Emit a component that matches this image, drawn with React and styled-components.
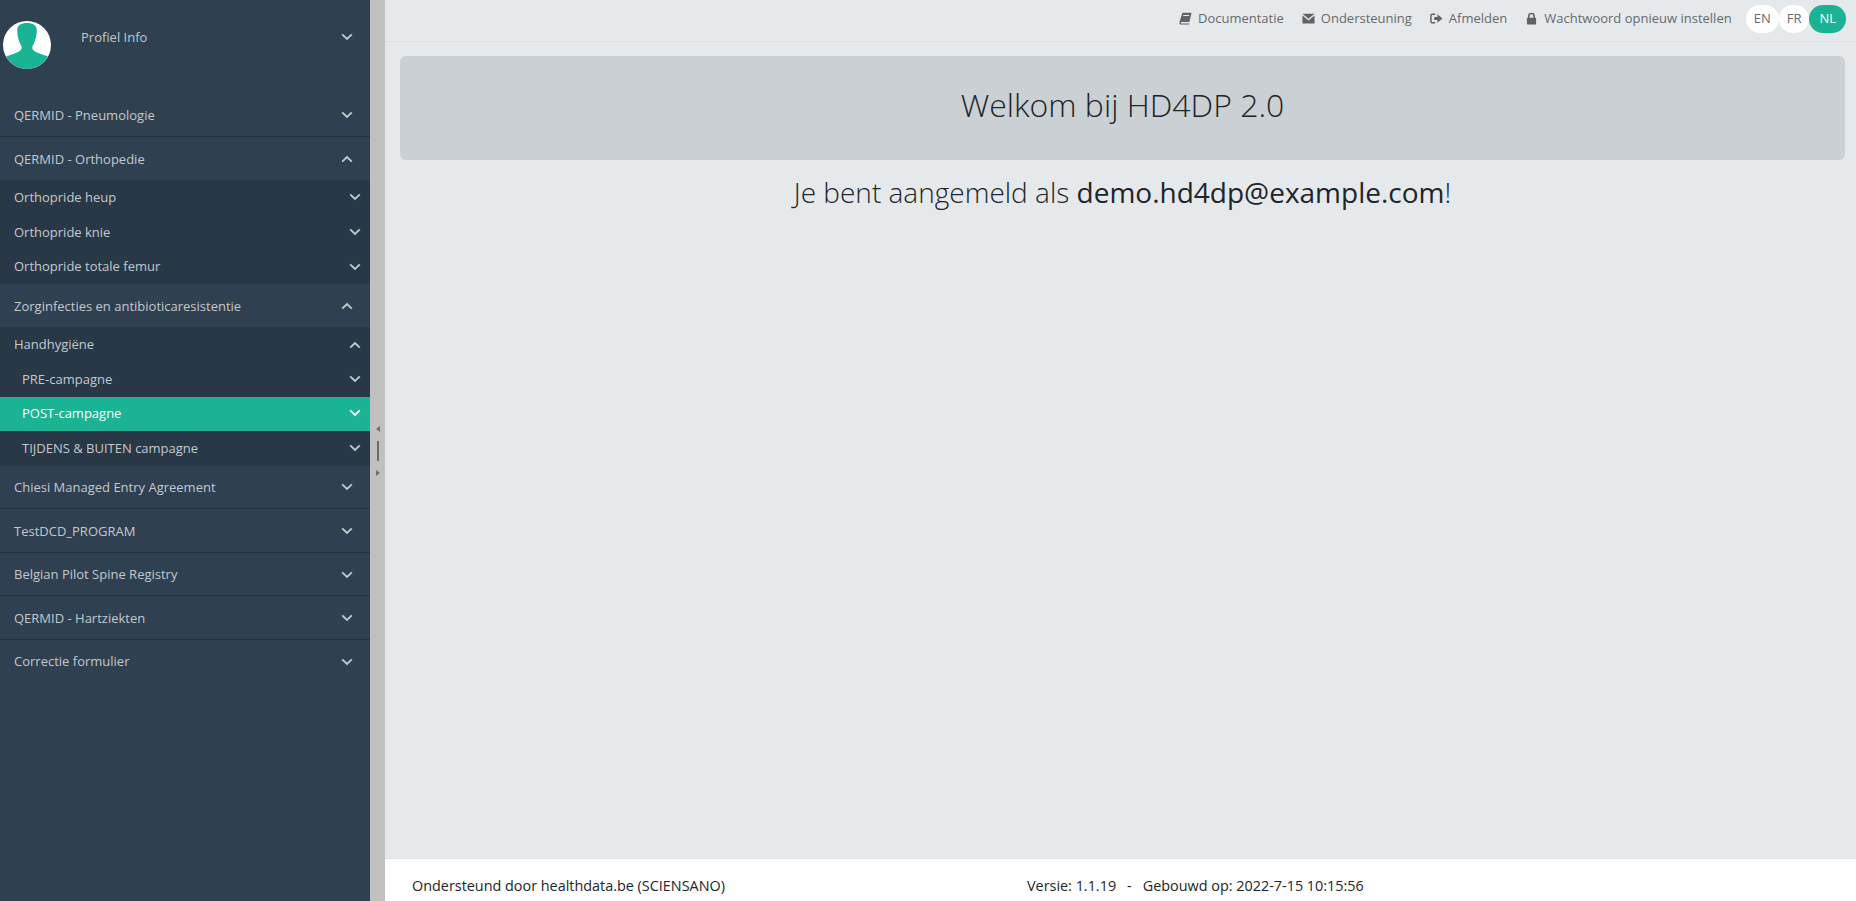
import React from 'react'
import styled, { createGlobalStyle } from 'styled-components'

const GlobalStyle = createGlobalStyle`
  html, body {
    margin: 0;
    padding: 0;
    height: 100%;
    overflow: hidden;
    font-family: "Open Sans", "Noto Sans", sans-serif;
    font-size: 13px;
    line-height: 1.42857;
    color: #212529;
  }
`

const Chevron = ({ up }) => (
  <ChevronSvg viewBox="0 0 12 8" $up={up}>
    <path d="M1.2 1.4 L6 6 L10.8 1.4" fill="none" stroke="currentColor" strokeWidth="1.9" />
  </ChevronSvg>
)

const BookIcon = () => (
  <TopIcon viewBox="0 0 13 13">
    <path d="M3.4 0.8 H12.6 L10.4 10 H2.4 C1.6 10 1.5 11.4 2.4 11.4 H10.6 L10.2 12.6 H1.8 C0.4 12.6 0.2 11.2 0.5 10 Z M4.4 3 L4.1 4 H10 L10.3 3 Z" fill="currentColor" fillRule="evenodd" />
  </TopIcon>
)

const MailIcon = () => (
  <TopIcon viewBox="0 0 14 13">
    <path d="M0.5 1.4 H13.5 L7 6.8 Z M0.5 3.2 L7 8.6 L13.5 3.2 V11.8 H0.5 Z" fill="currentColor" />
  </TopIcon>
)

const LogoutIcon = () => (
  <TopIcon viewBox="0 0 14 13">
    <path d="M5.6 2 H2.2 C1.4 2 1 2.6 1 3.2 V9.8 C1 10.4 1.4 11 2.2 11 H5.6" fill="none" stroke="currentColor" strokeWidth="1.6" />
    <path d="M4.6 4.8 H8 V2 L13.4 6.5 L8 11 V8.2 H4.6 Z" fill="currentColor" />
  </TopIcon>
)

const LockIcon = () => (
  <TopIcon viewBox="0 0 12 13">
    <path d="M3.4 6 V3.8 C3.4 0.8 8.6 0.8 8.6 3.8 V6" fill="none" stroke="currentColor" strokeWidth="1.6" />
    <rect x="1.4" y="5.8" width="9.2" height="6.6" rx="0.6" fill="currentColor" />
  </TopIcon>
)

const Avatar = () => (
  <AvatarSvg viewBox="0 0 48 48">
    <circle cx="24" cy="24" r="24" fill="#ffffff" />
    <path d="M3.2 35.5 L14 31.4 C18 29.8 19 27.6 18.6 25.4 C16 21 14.2 15.5 14.2 9.5 C14.2 4 18 2 24 2 C30 2 33.8 4 33.8 9.5 C33.8 15.5 32 21 29.4 25.4 C29 27.6 30 29.8 34 31.4 L44.8 35.5 C40.6 43 33 48 24 48 C15 48 7.4 43 3.2 35.5 Z" fill="#1ab394" />
  </AvatarSvg>
)

const links = [
  { label: 'Documentatie', icon: <BookIcon /> },
  { label: 'Ondersteuning', icon: <MailIcon /> },
  { label: 'Afmelden', icon: <LogoutIcon /> },
  { label: 'Wachtwoord opnieuw instellen', icon: <LockIcon /> },
]

function App() {
  return (
    <>
      <GlobalStyle />
      <Page>
        <Sidebar>
          <ProfileRow>
            <Avatar />
            <ProfileName>Profiel Info</ProfileName>
            <Chevron />
          </ProfileRow>

          <Menu>
            <MenuRow>QERMID - Pneumologie<Chevron /></MenuRow>

            <MenuRow $open>QERMID - Orthopedie<Chevron up /></MenuRow>
            <SubMenu>
              <SubRow>Orthopride heup<Chevron /></SubRow>
              <SubRow>Orthopride knie<Chevron /></SubRow>
              <SubRow>Orthopride totale femur<Chevron /></SubRow>
            </SubMenu>

            <MenuRow $open>Zorginfecties en antibioticaresistentie<Chevron up /></MenuRow>
            <SubMenu>
              <SubRow>Handhygiëne<Chevron up /></SubRow>
              <SubRow $nested>PRE-campagne<Chevron /></SubRow>
              <SubRow $nested $active>POST-campagne<Chevron /></SubRow>
              <SubRow $nested>TIJDENS &amp; BUITEN campagne<Chevron /></SubRow>
            </SubMenu>

            <MenuRow>Chiesi Managed Entry Agreement<Chevron /></MenuRow>
            <MenuRow>TestDCD_PROGRAM<Chevron /></MenuRow>
            <MenuRow>Belgian Pilot Spine Registry<Chevron /></MenuRow>
            <MenuRow>QERMID - Hartziekten<Chevron /></MenuRow>
            <MenuRow $last>Correctie formulier<Chevron /></MenuRow>
          </Menu>
        </Sidebar>

        <Splitter>
          <Arrow $dir="left" />
          <Grip />
          <Arrow $dir="right" />
        </Splitter>

        <Main>
          <TopBar>
            {links.map((l) => (
              <TopLink key={l.label}>
                {l.icon}
                {l.label}
              </TopLink>
            ))}
            <LangGroup>
              <LangButton>EN</LangButton>
              <LangButton>FR</LangButton>
              <LangButton $active>NL</LangButton>
            </LangGroup>
          </TopBar>

          <Content>
            <Jumbotron>
              <Title>Welkom bij HD4DP 2.0</Title>
            </Jumbotron>
            <Welcome>
              Je bent aangemeld als <Email>demo.hd4dp@example.com</Email>!
            </Welcome>
          </Content>

          <Footer>
            <span>Ondersteund door healthdata.be (SCIENSANO)</span>
            <span>Versie: 1.1.19<FooterDash>-</FooterDash>Gebouwd op: 2022-7-15 10:15:56</span>
          </Footer>
        </Main>
      </Page>
    </>
  )
}

const Page = styled.div`
  display: flex;
  height: 100vh;
  overflow: hidden;
  background: #e5e9ec;
`

const Sidebar = styled.aside`
  width: 370px;
  flex: none;
  background: #2f4050;
  color: #c3c8cc;
`

const ChevronSvg = styled.svg`
  width: 12px;
  height: 8px;
  flex: none;
  transform: ${(p) => (p.$up ? 'rotate(180deg)' : 'none')};
`

const ProfileRow = styled.div`
  display: flex;
  align-items: center;
  height: 93px;
  padding: 0 17px 19px 3px;
  box-sizing: border-box;
`

const AvatarSvg = styled.svg`
  width: 48px;
  height: 48px;
  flex: none;
  margin-top: 15px;
`

const ProfileName = styled.span`
  flex: 1;
  margin-left: 30px;
`

const Menu = styled.nav`
  display: flex;
  flex-direction: column;
`

const MenuRow = styled.div`
  display: flex;
  align-items: center;
  justify-content: space-between;
  padding: ${(p) => (p.$open ? '13px 17px 11px 14px' : '12.5px 17px 11.5px 14px')};
  border-bottom: 1px solid ${(p) => (p.$open || p.$last ? '#2f4050' : '#27343f')};
`

const SubMenu = styled.div`
  background: #293846;
`

const SubRow = styled.div`
  display: flex;
  align-items: center;
  justify-content: space-between;
  padding: ${(p) => (p.$active ? '7px 9px 9px' : '8px 9px 8px')};
  padding-left: ${(p) => (p.$nested ? '22px' : '14px')};
  background: ${(p) => (p.$active ? '#1ab394' : 'transparent')};
  color: ${(p) => (p.$active ? '#ffffff' : 'inherit')};
`

const Splitter = styled.div`
  width: 15px;
  flex: none;
  background: #c0c0c0;
  display: flex;
  flex-direction: column;
  align-items: center;
  justify-content: center;
  gap: 9px;
`

const Grip = styled.div`
  width: 2px;
  height: 20px;
  background: #6b6b6b;
`

const Arrow = styled.div`
  width: 0;
  height: 0;
  border-top: 3px solid transparent;
  border-bottom: 3px solid transparent;
  border-right: ${(p) => (p.$dir === 'left' ? '4px solid #666f7a' : 'none')};
  border-left: ${(p) => (p.$dir === 'right' ? '4px solid #666f7a' : 'none')};
`

const Main = styled.main`
  flex: 1;
  min-width: 0;
  display: flex;
  flex-direction: column;
`

const TopBar = styled.header`
  height: 42px;
  flex: none;
  box-sizing: border-box;
  display: flex;
  align-items: center;
  justify-content: flex-end;
  padding: 0 10px 5px 0;
  border-bottom: 1px solid #dde1e4;
  color: #676a6c;
`

const TopLink = styled.span`
  display: flex;
  align-items: center;
  gap: 6px;
  margin-right: 18px;
`

const TopIcon = styled.svg`
  width: 13px;
  height: 13px;
  flex: none;
  color: #5f6366;
`

const LangGroup = styled.div`
  display: flex;
  margin-left: -4px;
`

const LangButton = styled.span`
  display: flex;
  align-items: center;
  justify-content: center;
  height: 28px;
  padding: 0 ${(p) => (p.$active ? '10px' : '8px')};
  margin-top: 1px;
  border-radius: 14px;
  background: ${(p) => (p.$active ? '#1ab394' : '#ffffff')};
  color: ${(p) => (p.$active ? '#ffffff' : '#676a6c')};
`

const Content = styled.div`
  flex: 1;
  padding: 14px 11px 0 15px;
`

const Jumbotron = styled.div`
  height: 104px;
  display: flex;
  align-items: center;
  justify-content: center;
  background: #cbd0d4;
  border-radius: 6px;
`

const Title = styled.h1`
  margin: 0 0 6px;
  font-size: 32px;
  font-weight: 300;
  line-height: 1.2;
  color: #212529;
`

const Welcome = styled.p`
  margin: 11px 0 0;
  text-align: center;
  font-size: 28px;
  font-weight: 300;
  line-height: 1.5;
`

const Email = styled.span`
  font-weight: 400;
`

const Footer = styled.footer`
  height: 43px;
  flex: none;
  box-sizing: border-box;
  display: grid;
  grid-template-columns: 615px 1fr;
  align-items: center;
  font-size: 14.4px;
  padding: 12px 0 0 27px;
  background: #ffffff;
  border-top: 1px solid #dde1e4;
  color: #212529;
`

const FooterDash = styled.span`
  margin: 0 11px;
`

export default App
